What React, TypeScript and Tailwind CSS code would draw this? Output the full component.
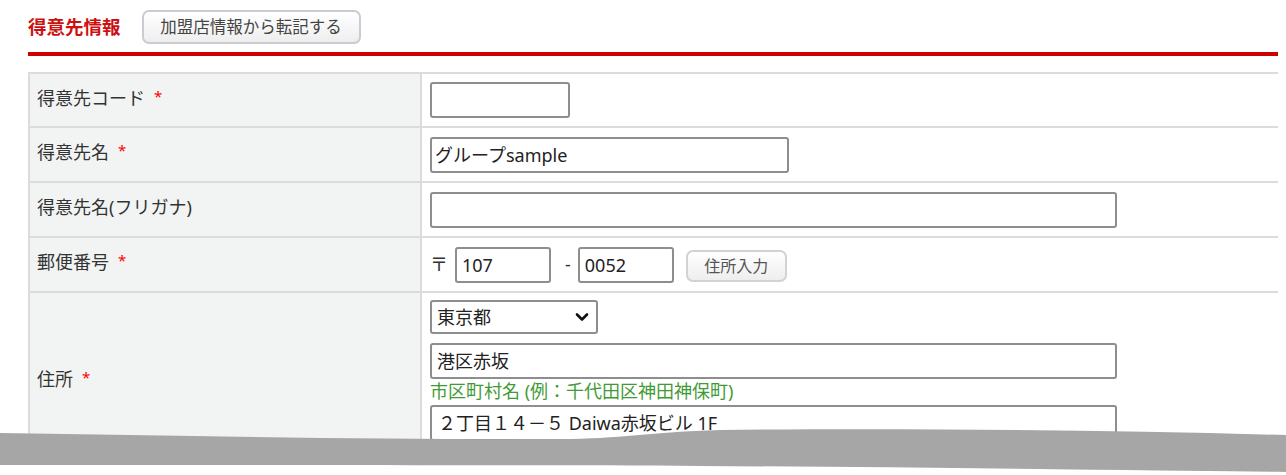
import React from 'react';

const input =
  'h-[36px] rounded-[3px] border-2 border-[#8e8e8e] bg-white px-[5px] text-[18px] leading-none text-[#222] flex items-center';

function Required() {
  return <span className="ml-[9px] text-[15px] leading-none text-[#f00] relative -top-[2px]">*</span>;
}

function Row({
  label,
  required,
  className,
  children,
}: {
  label: string;
  required?: boolean;
  className: string;
  children: React.ReactNode;
}) {
  return (
    <div className={`flex border-b-2 border-[#dcdcdc] ${className}`}>
      <div className="flex w-[392px] shrink-0 items-center border-r-2 border-[#dcdcdc] bg-[#f2f3f3] pb-[4px] pl-[7px] text-[18px] text-[#333]">
        <span>{label}</span>
        {required && <Required />}
      </div>
      <div className="flex flex-1 items-center pl-[8px]">{children}</div>
    </div>
  );
}

export default function App() {
  return (
    <div className="relative h-[475px] w-[1286px] overflow-hidden bg-white font-['Noto_Sans','Noto_Sans_CJK_JP',sans-serif]">
      <div className="flex h-[34px] items-center pl-[28px] pt-[10px] box-content">
        <h2 className="text-[18.5px] font-bold text-[#cc1111]">得意先情報</h2>
        <button className="ml-[21px] h-[34px] w-[219px] rounded-[7px] border-2 border-[#c9ccd2] bg-gradient-to-b from-white to-[#eeeeee] text-[16.5px] text-[#444]">
          加盟店情報から転記する
        </button>
      </div>

      <div className="ml-[28px] mt-[8px] h-[4px] w-[1250px] bg-[#cc0000]" />

      <div className="ml-[28px] mt-[16px] w-[1250px] border-l-2 border-t-2 border-[#dcdcdc]">
        <Row label="得意先コード" required className="h-[54px]">
          <div className={`${input} w-[140px]`} />
        </Row>
        <Row label="得意先名" required className="h-[55px]">
          <div className={`${input} w-[359px] pl-[3px]`}>グループsample</div>
        </Row>
        <Row label="得意先名(フリガナ)" className="h-[55px]">
          <div className={`${input} w-[687px]`} />
        </Row>
        <Row label="郵便番号" required className="h-[55px]">
          <span className="text-[18px] text-[#333]">〒</span>
          <div className={`${input} ml-[7px] w-[96px]`}>107</div>
          <span className="ml-[14px] text-[18px] text-[#333]">-</span>
          <div className={`${input} ml-[7px] w-[96px]`}>0052</div>
          <button className="ml-[12px] mt-[3px] h-[32px] w-[101px] rounded-[7px] border-2 border-[#cfd2d6] bg-gradient-to-b from-white to-[#eeeeee] text-[16px] text-[#555]">
            住所入力
          </button>
        </Row>
        <div className="flex h-[178px] border-b-2 border-[#dcdcdc]">
          <div className="flex w-[392px] shrink-0 items-center border-r-2 border-[#dcdcdc] bg-[#f2f3f3] pb-[4px] pl-[7px] text-[18px] text-[#333]">
            <span>住所</span>
            <Required />
          </div>
          <div className="flex flex-1 flex-col items-start pl-[8px] pt-[7px]">
            <div className="flex h-[34px] w-[168px] items-center justify-between rounded-[3px] border-2 border-[#8e8e8e] bg-white pl-[5px] pr-[7px] text-[18px] text-[#222]">
              <span>東京都</span>
              <svg width="14" height="10" viewBox="0 0 14 10" fill="none">
                <path d="M2 2.5 L7 7.5 L12 2.5" stroke="#111" strokeWidth="2.6" strokeLinecap="round" strokeLinejoin="round" />
              </svg>
            </div>
            <div className={`${input} mt-[9px] w-[687px]`}>港区赤坂</div>
            <div className="text-[18px] leading-[24px] text-[#3f9b35]">市区町村名 (例：千代田区神田神保町)</div>
            <div className={`${input} mt-[2px] w-[687px] pl-[6px]`}>２丁目１４－５ Daiwa赤坂ビル 1F</div>
          </div>
        </div>
      </div>

      <svg
        className="absolute left-0 top-[428px]"
        width="1286"
        height="47"
        viewBox="0 0 1286 47"
      >
        <path
          d="M0 37 C200 37 500 37 700 38 C900 39 1100 42 1286 44 L1286 47 L0 47 Z"
          fill="#ffffff"
        />
        <path
          d="M0 5 C200 8 400 12 560 11 C620 11 650 4 720 2 C900 0 1100 2 1286 7 L1286 44 C1100 42 900 39 700 38 C500 37 200 37 0 37 Z"
          fill="#a6a6a6"
        />
      </svg>
    </div>
  );
}
